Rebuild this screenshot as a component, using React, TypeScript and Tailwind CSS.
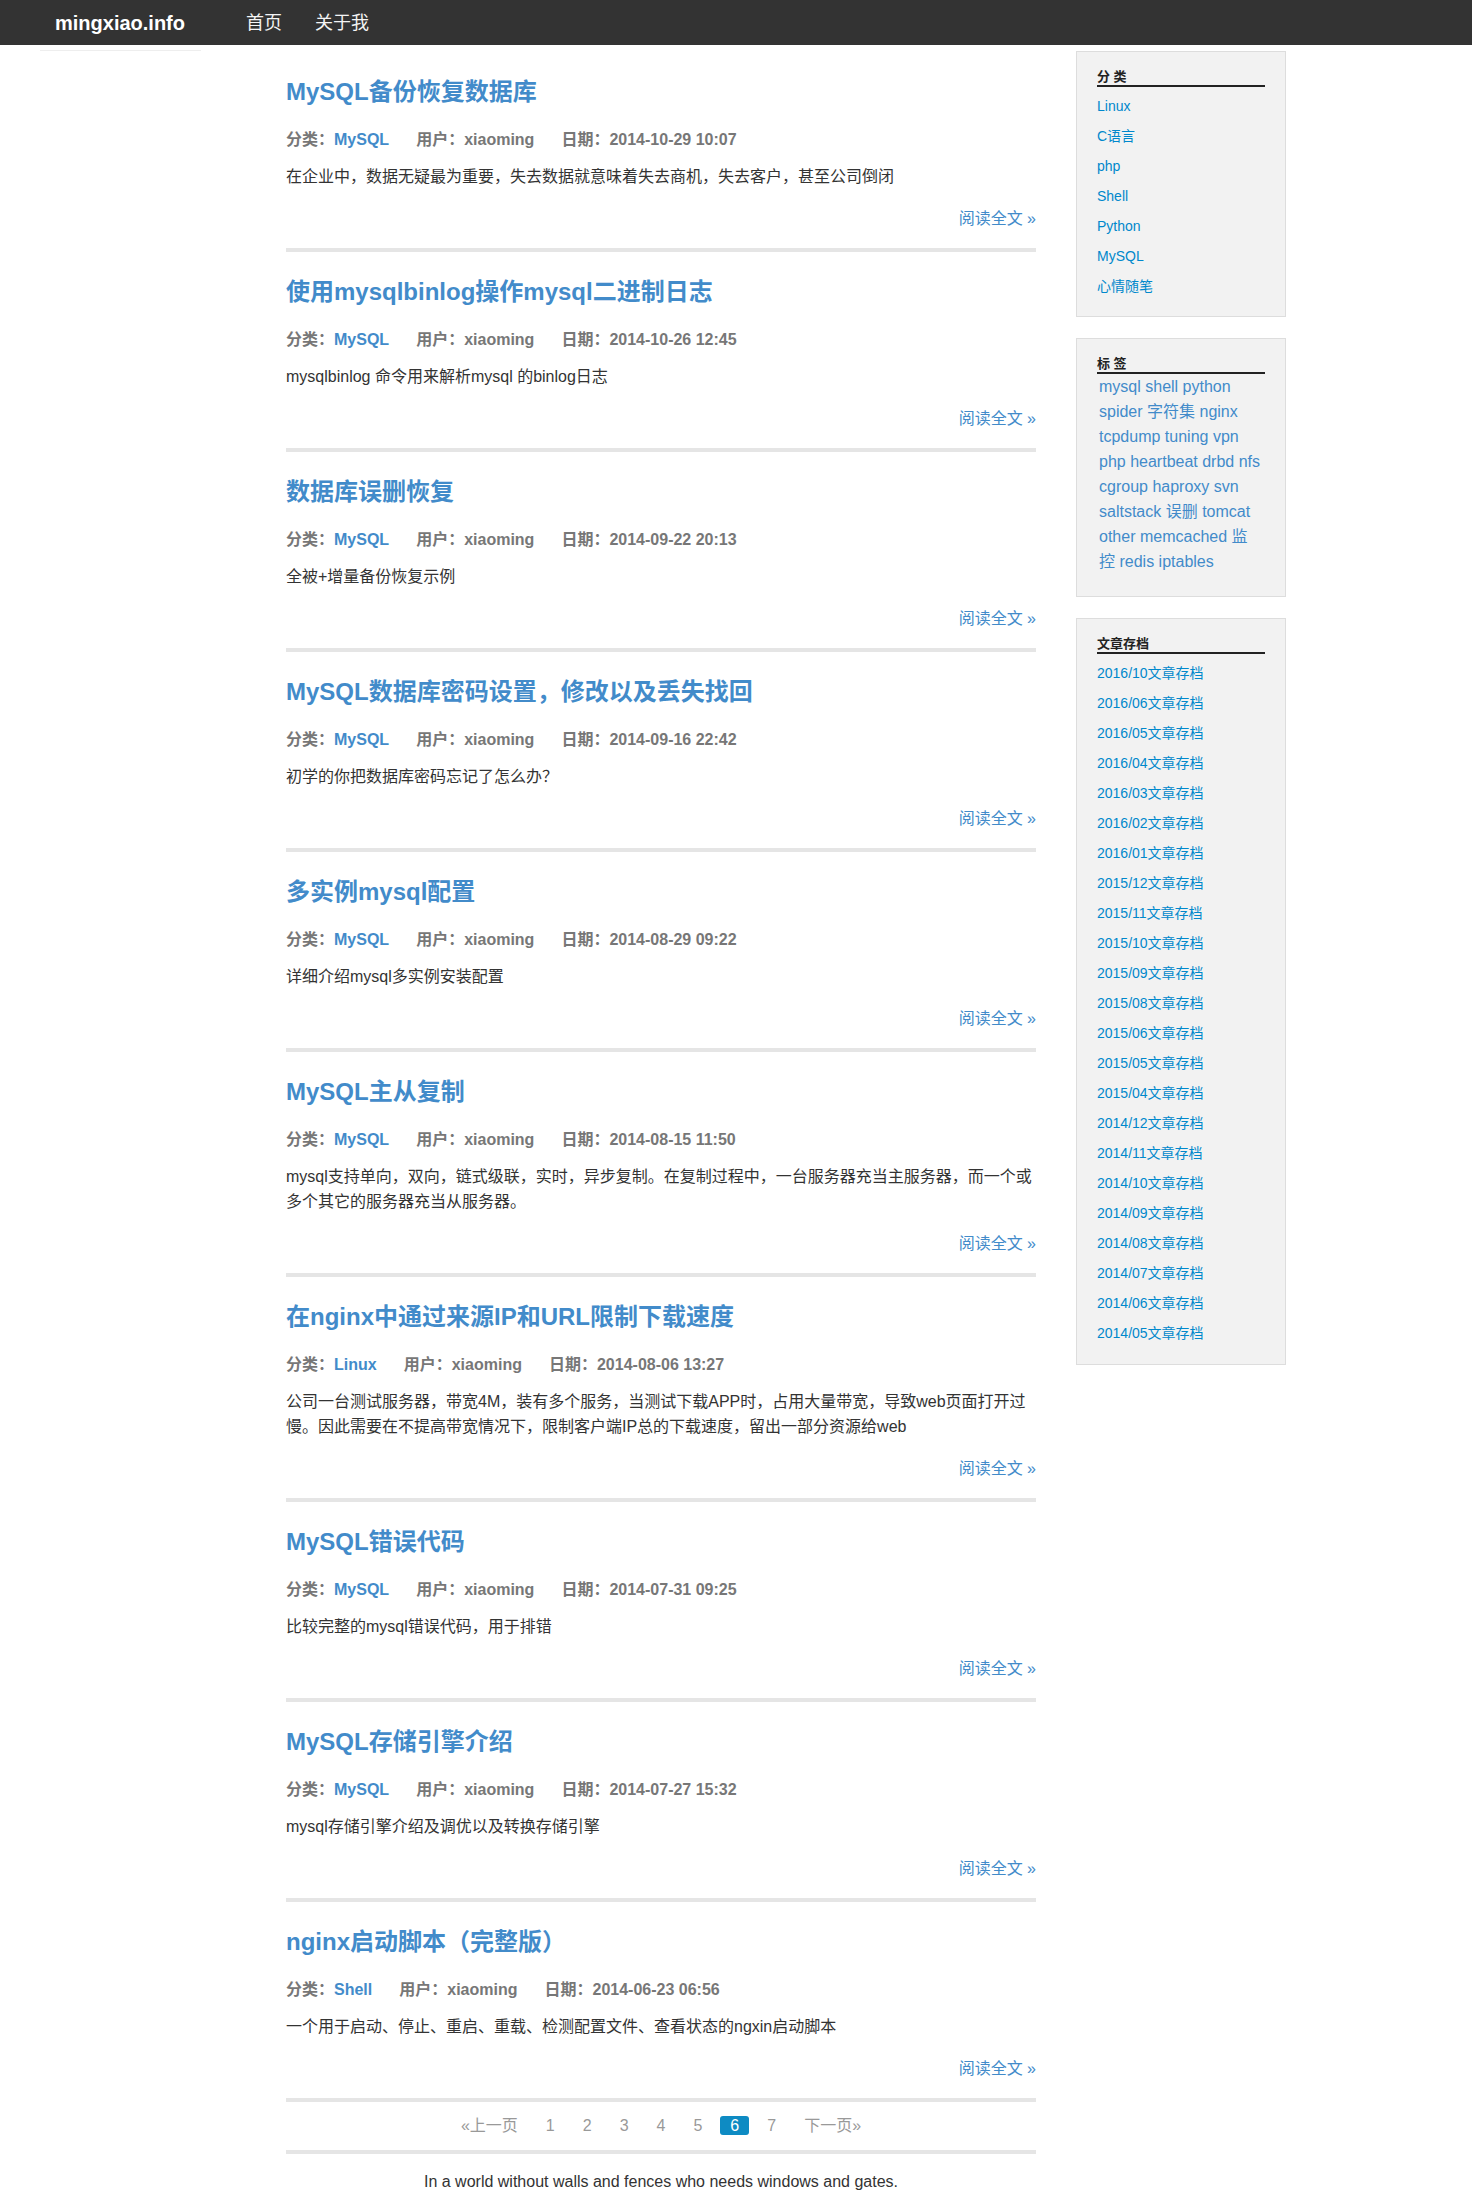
const posts = [
  {
    title: "MySQL备份恢复数据库",
    cat: "MySQL",
    date: "2014-10-29 10:07",
    text: "在企业中，数据无疑最为重要，失去数据就意味着失去商机，失去客户，甚至公司倒闭",
  },
  {
    title: "使用mysqlbinlog操作mysql二进制日志",
    cat: "MySQL",
    date: "2014-10-26 12:45",
    text: "mysqlbinlog 命令用来解析mysql 的binlog日志",
  },
  { title: "数据库误删恢复", cat: "MySQL", date: "2014-09-22 20:13", text: "全被+增量备份恢复示例" },
  {
    title: "MySQL数据库密码设置，修改以及丢失找回",
    cat: "MySQL",
    date: "2014-09-16 22:42",
    text: "初学的你把数据库密码忘记了怎么办？",
  },
  { title: "多实例mysql配置", cat: "MySQL", date: "2014-08-29 09:22", text: "详细介绍mysql多实例安装配置" },
  {
    title: "MySQL主从复制",
    cat: "MySQL",
    date: "2014-08-15 11:50",
    text: "mysql支持单向，双向，链式级联，实时，异步复制。在复制过程中，一台服务器充当主服务器，而一个或多个其它的服务器充当从服务器。",
  },
  {
    title: "在nginx中通过来源IP和URL限制下载速度",
    cat: "Linux",
    date: "2014-08-06 13:27",
    text: "公司一台测试服务器，带宽4M，装有多个服务，当测试下载APP时，占用大量带宽，导致web页面打开过慢。因此需要在不提高带宽情况下，限制客户端IP总的下载速度，留出一部分资源给web",
  },
  { title: "MySQL错误代码", cat: "MySQL", date: "2014-07-31 09:25", text: "比较完整的mysql错误代码，用于排错" },
  {
    title: "MySQL存储引擎介绍",
    cat: "MySQL",
    date: "2014-07-27 15:32",
    text: "mysql存储引擎介绍及调优以及转换存储引擎",
  },
  {
    title: "nginx启动脚本（完整版）",
    cat: "Shell",
    date: "2014-06-23 06:56",
    text: "一个用于启动、停止、重启、重载、检测配置文件、查看状态的ngxin启动脚本",
  },
];

const categories = ["Linux", "C语言", "php", "Shell", "Python", "MySQL", "心情随笔"];

const tags = [
  "mysql", "shell", "python", "spider", "字符集", "nginx", "tcpdump", "tuning", "vpn", "php",
  "heartbeat", "drbd", "nfs", "cgroup", "haproxy", "svn", "saltstack", "误删", "tomcat", "other",
  "memcached", "监控", "redis", "iptables",
];

const archives = [
  "2016/10", "2016/06", "2016/05", "2016/04", "2016/03", "2016/02", "2016/01", "2015/12",
  "2015/11", "2015/10", "2015/09", "2015/08", "2015/06", "2015/05", "2015/04", "2014/12",
  "2014/11", "2014/10", "2014/09", "2014/08", "2014/07", "2014/06", "2014/05",
];

function SideBox({ title, children, className }: { title: string; children: React.ReactNode; className?: string }) {
  return (
    <div className={`border border-[#dddddd] bg-[#f2f2f2] px-[20px] pt-[17px] ${className ?? ""}`}>
      <h4 className="border-b-2 border-[#222] text-[13px] font-bold leading-[16px] text-[#222]">{title}</h4>
      {children}
    </div>
  );
}

export default function App() {
  return (
    <div className="min-h-[2210px] bg-white font-['Liberation_Sans','Noto_Sans_CJK_SC',sans-serif] text-[#333]">
      <header className="flex h-[45px] items-center bg-[#333333] pl-[55px] text-white">
        <a className="text-[20px] font-bold leading-none">mingxiao.info</a>
        <nav className="ml-[61px] flex gap-[33px] text-[18px] leading-none text-[#f4f4f4]">
          <a>首页</a>
          <a>关于我</a>
        </nav>
      </header>

      <div className="flex">
        <div className="w-[286px] shrink-0">
          <div className="ml-[40px] mt-[5px] h-[1px] w-[161px] bg-[#eeeeee]" />
        </div>

        <main className="w-[750px] shrink-0 pt-[34px]">
          {posts.map((p, i) => (
            <article key={p.title} className={i === 0 ? "" : "mt-[27px]"}>
              <h2 className="text-[24px] font-bold leading-[26px] text-[#428bca]">{p.title}</h2>
              <div className="mt-[24px] flex gap-[27px] text-[16px] font-bold leading-[22px] text-[#777]">
                <span>
                  分类：<a className="text-[#428bca]">{p.cat}</a>
                </span>
                <span>用户：xiaoming</span>
                <span>日期：{p.date}</span>
              </div>
              <p className="mt-[13px] text-[16px] leading-[25px] text-[#333]">{p.text}</p>
              <div className="mt-[19px] text-right text-[16px] leading-[22px]">
                <a className="text-[#428bca]">阅读全文 »</a>
              </div>
              <div className="mt-[18px] h-[4px] bg-[#e5e5e5]" />
            </article>
          ))}

          <div className="flex justify-center gap-[8px] pb-[15px] pt-[14px] text-[16px] leading-[19px] text-[#999]">
            <a className="px-[10px]">«上一页</a>
            {["1", "2", "3", "4", "5", "6", "7"].map((n) => (
              <a
                key={n}
                className={
                  n === "6"
                    ? "rounded-[3px] bg-[#0e8bc3] px-[10px] text-white"
                    : "px-[10px]"
                }
              >
                {n}
              </a>
            ))}
            <a className="px-[10px]">下一页»</a>
          </div>
          <div className="h-[4px] bg-[#e5e5e5]" />

          <p className="mt-[17px] text-center text-[16px] leading-[22px] text-[#333]">
            In a world without walls and fences who needs windows and gates.
          </p>
        </main>

        <aside className="ml-[40px] mt-[6px] w-[210px] shrink-0">
          <SideBox title="分 类" className="pb-[15px]">
            <ul className="mt-[4px]">
              {categories.map((c) => (
                <li key={c} className="text-[14px] leading-[30px]">
                  <a className="text-[#0088cc]">{c}</a>
                </li>
              ))}
            </ul>
          </SideBox>

          <SideBox title="标 签" className="mt-[21px] pb-[22px]">
            <div className="ml-[2px] w-[162px] text-[16px] leading-[25px]">
              {tags.map((t, i) => (
                <span key={t}>
                  <a className="text-[#428bca]">{t}</a>
                  {i < tags.length - 1 ? " " : ""}
                </span>
              ))}
            </div>
          </SideBox>

          <SideBox title="文章存档" className="mt-[21px] pb-[16px]">
            <ul className="mt-[4px]">
              {archives.map((a) => (
                <li key={a} className="text-[14px] leading-[30px]">
                  <a className="text-[#0088cc]">{a}文章存档</a>
                </li>
              ))}
            </ul>
          </SideBox>
        </aside>
      </div>
    </div>
  );
}
